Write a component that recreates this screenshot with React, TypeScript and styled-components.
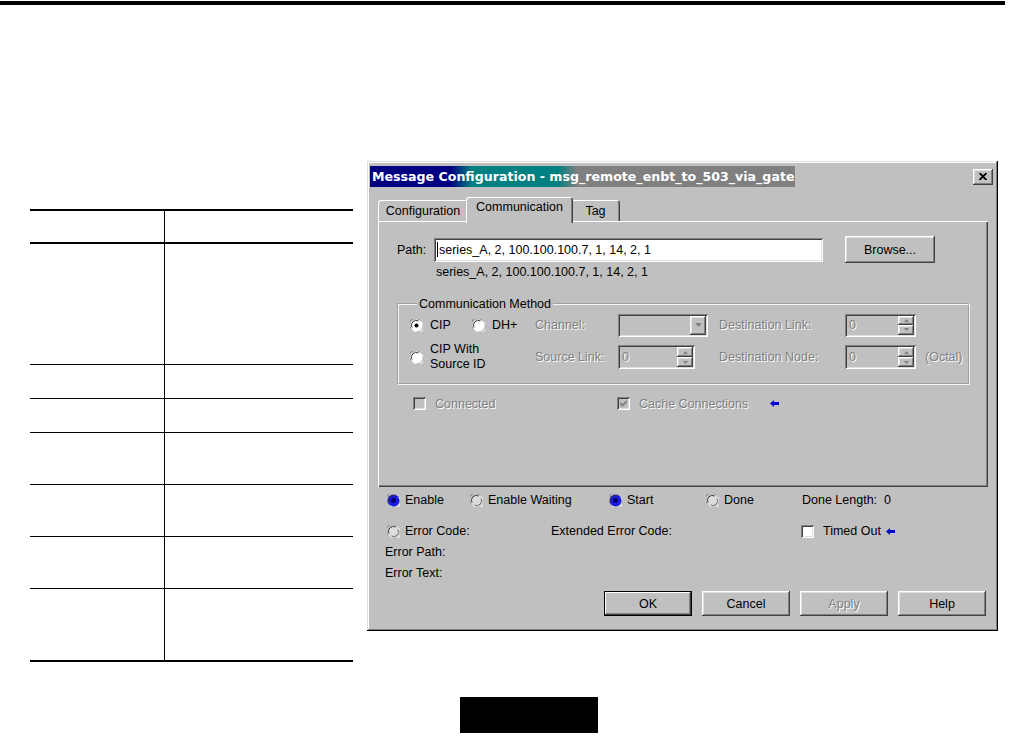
import styled, { createGlobalStyle, css } from "styled-components";

const GlobalStyle = createGlobalStyle`
  html, body {
    margin: 0;
    padding: 0;
    background: #fff;
  }
  body {
    font-family: "Liberation Sans", Arial, sans-serif;
  }
`;

// win98 bevels
const raised = css`
  box-shadow: inset -1px -1px #404040, inset 1px 1px #fff, inset -2px -2px #808080,
    inset 2px 2px #dfdfdf;
`;
const sunken = css`
  box-shadow: inset 1px 1px #808080, inset -1px -1px #fff, inset 2px 2px #404040,
    inset -2px -2px #dfdfdf;
`;

type RadioKind = "dot" | "empty" | "blue" | "pale";

function Radio({ kind }: { kind: RadioKind }) {
  const fill = kind === "blue" ? "#1a1ae6" : kind === "pale" ? "#dcdcdc" : "#fff";
  return (
    <svg width="13" height="13" viewBox="0 0 13 13">
      <circle cx="6.5" cy="6.5" r="6" fill={fill} />
      <path d="M1 9.5 A6 6 0 0 1 9.5 1" stroke="#808080" strokeWidth="1" fill="none" />
      <path d="M2 8.5 A4.8 4.8 0 0 1 8.5 2" stroke="#303030" strokeWidth="1" fill="none" />
      <path d="M12 3.5 A6 6 0 0 1 3.5 12" stroke="#fff" strokeWidth="1" fill="none" />
      {kind === "pale" && (
        <path d="M11 4.5 A4.8 4.8 0 0 1 4.5 11" stroke="#707070" strokeWidth="1" fill="none" />
      )}
      {kind === "dot" && <circle cx="6.5" cy="6.5" r="2" fill="#000" />}
      {kind === "blue" && <circle cx="6.5" cy="6.5" r="2.4" fill="#000060" />}
    </svg>
  );
}

function BackArrow() {
  return (
    <svg width="9" height="7" viewBox="0 0 9 7">
      <path d="M0 3.5 L4 0 V2 H9 V5 H4 V7 Z" fill="#0000d0" />
    </svg>
  );
}

const Page = styled.div`
  width: 1010px;
  height: 737px;
  overflow: hidden;
  background: #fff;
`;

const TopRule = styled.div`
  height: 4px;
  margin: 1px 5px 0 0;
  background: #000;
`;

const Main = styled.div`
  display: flex;
  align-items: flex-start;
  gap: 14px;
  padding-left: 30px;
  margin-top: 156px;
`;

const SpecTable = styled.div`
  width: 323px;
  margin-top: 48px;
`;

const SpecRow = styled.div<{ $h: number; $top?: boolean; $thick?: boolean }>`
  display: grid;
  grid-template-columns: 134px 1fr;
  box-sizing: border-box;
  height: ${(p) => p.$h}px;
  border-top: ${(p) => (p.$top ? "2px solid #000" : "none")};
  border-bottom: ${(p) => (p.$thick ? 2 : 1)}px solid #000;
`;

const SpecCell = styled.div`
  & + & {
    border-left: 1px solid #000;
  }
`;

const Footer = styled.div`
  padding-left: 460px;
  margin-top: 35px;
`;

const BlackBox = styled.div`
  width: 138px;
  height: 36px;
  background: #000;
`;

const Dialog = styled.div`
  width: 631px;
  height: 470px;
  box-sizing: border-box;
  padding: 5px 3px 0;
  background: #c0c0c0;
  box-shadow: inset -1px -1px #000, inset 1px 1px #dfdfdf, inset -2px -2px #808080,
    inset 2px 2px #fff;
  display: flex;
  flex-direction: column;
  font-family: "Liberation Sans", Arial, sans-serif;
  font-size: 12.5px;
  color: #000;
`;

const TitleBar = styled.div`
  display: flex;
  align-items: center;
  justify-content: space-between;
  height: 21px;
`;

const TitleText = styled.div`
  width: 425px;
  height: 21px;
  box-sizing: border-box;
  padding-left: 2px;
  line-height: 21px;
  white-space: nowrap;
  overflow: hidden;
  color: #fff;
  font-family: "DejaVu Sans", Verdana, sans-serif;
  font-weight: bold;
  font-size: 12.6px;
  background: linear-gradient(
    90deg,
    #000080 0%,
    #000080 19%,
    #008080 24%,
    #008080 44%,
    #808080 49%,
    #808080 100%
  );
`;

const CloseButton = styled.div`
  width: 20px;
  height: 16px;
  margin-right: 2px;
  background: #c0c0c0;
  display: flex;
  align-items: center;
  justify-content: center;
  ${raised}
`;

const Body = styled.div`
  flex: 1;
  display: flex;
  flex-direction: column;
  padding: 10px 7px 0 8px;
`;

const TabStrip = styled.div`
  display: flex;
  align-items: flex-end;
  height: 24px;
`;

const Tab = styled.div<{ $w: number; $active?: boolean }>`
  position: relative;
  box-sizing: border-box;
  width: ${(p) => p.$w}px;
  height: ${(p) => (p.$active ? 26 : 21)}px;
  margin: ${(p) => (p.$active ? "0 -2px -2px -2px" : "0")};
  z-index: ${(p) => (p.$active ? 2 : 1)};
  padding-top: ${(p) => (p.$active ? 3 : 4)}px;
  text-align: center;
  background: #c0c0c0;
  border-radius: 3px 3px 0 0;
  box-shadow: inset 1px 1px #fff, inset -1px 0 #404040, inset -2px 0 #808080;
`;

const Panel = styled.div`
  position: relative;
  height: 266px;
  box-sizing: border-box;
  padding: 15px 0 0 19px;
  box-shadow: inset 1px 1px #fff, inset -1px -1px #404040, inset -2px -2px #808080;
`;

const PathRow = styled.div`
  display: flex;
  align-items: center;
  height: 27px;
`;

const PathLabel = styled.span`
  width: 37px;
`;

const TextInput = styled.div`
  width: 389px;
  height: 24px;
  box-sizing: border-box;
  display: flex;
  align-items: center;
  padding-left: 3px;
  background: #fff;
  white-space: nowrap;
  ${sunken}
`;

const Caret = styled.span`
  width: 1px;
  height: 15px;
  margin-right: 1px;
  background: #000;
`;

const Button = styled.div<{ $w: number; $h: number; $default?: boolean; $disabled?: boolean }>`
  width: ${(p) => p.$w}px;
  height: ${(p) => p.$h}px;
  box-sizing: border-box;
  display: flex;
  align-items: center;
  justify-content: center;
  background: #c0c0c0;
  color: ${(p) => (p.$disabled ? "#808080" : "#000")};
  text-shadow: ${(p) => (p.$disabled ? "1px 1px #fff" : "none")};
  ${(p) =>
    p.$default
      ? css`
          box-shadow: inset 0 0 0 1px #000, inset -2px -2px #404040, inset 2px 2px #fff,
            inset -3px -3px #808080;
        `
      : raised}
`;

const BrowseButton = styled(Button)`
  margin-left: 22px;
`;

const PathEcho = styled.div`
  margin: 2px 0 0 39px;
  height: 15px;
  line-height: 15px;
`;

const GroupBox = styled.fieldset`
  width: 573px;
  box-sizing: border-box;
  margin: 17px 0 0;
  padding: 0 0 8px 11px;
  border: 2px groove #f4f4f4;
  min-inline-size: 0;
`;

const Legend = styled.legend`
  padding: 0 2px;
  margin-left: 7px;
`;

const ChoiceGrid = styled.div`
  display: grid;
  grid-template-columns: 125px 83px 101px 126px 80px auto;
  grid-template-rows: 28px 36px;
  align-items: center;
`;

const ChoicePair = styled.div`
  display: flex;
`;

const Choice = styled.label<{ $w?: number }>`
  display: flex;
  align-items: center;
  gap: 7px;
  width: ${(p) => (p.$w ? `${p.$w}px` : "auto")};
  line-height: 15px;
`;

const Dim = styled.span`
  color: #808080;
  text-shadow: 1px 1px #fff;
  white-space: nowrap;
`;

const Field = styled.div<{ $w: number; $h?: number }>`
  width: ${(p) => p.$w}px;
  height: ${(p) => p.$h ?? 23}px;
  box-sizing: border-box;
  display: flex;
  align-items: center;
  justify-content: space-between;
  padding: 2px;
  padding-left: 4px;
  background: #c0c0c0;
  ${sunken}
`;

const SpinStack = styled.div`
  display: flex;
  flex-direction: column;
  height: 100%;
`;

const SpinPart = styled.div`
  width: 16px;
  flex: 1;
  display: flex;
  align-items: center;
  justify-content: center;
  background: #c0c0c0;
  ${raised}
`;

const DropButton = styled.div`
  width: 16px;
  height: 100%;
  display: flex;
  align-items: center;
  justify-content: center;
  background: #c0c0c0;
  ${raised}
`;

function Spin({ w, h }: { w: number; h?: number }) {
  return (
    <Field $w={w} $h={h}>
      <Dim>0</Dim>
      <SpinStack>
        <SpinPart>
          <svg width="5" height="3" viewBox="0 0 5 3">
            <path d="M2.5 0 L5 3 H0 Z" fill="#808080" />
          </svg>
        </SpinPart>
        <SpinPart>
          <svg width="5" height="3" viewBox="0 0 5 3">
            <path d="M0 0 H5 L2.5 3 Z" fill="#808080" />
          </svg>
        </SpinPart>
      </SpinStack>
    </Field>
  );
}

const CheckRow = styled.div`
  display: flex;
  align-items: center;
  margin-top: 10px;
  padding-left: 16px;
  height: 17px;
`;

const CheckItem = styled.label<{ $w?: number }>`
  display: flex;
  align-items: center;
  gap: 9px;
  width: ${(p) => (p.$w ? `${p.$w}px` : "auto")};
`;

const Box = styled.span<{ $disabled?: boolean }>`
  width: 13px;
  height: 13px;
  box-sizing: border-box;
  display: flex;
  align-items: center;
  justify-content: center;
  background: ${(p) => (p.$disabled ? "#c0c0c0" : "#fff")};
  ${sunken}
`;

function Check({ checked, disabled }: { checked?: boolean; disabled?: boolean }) {
  return (
    <Box $disabled={disabled}>
      {checked && (
        <svg width="7" height="7" viewBox="0 0 7 7">
          <path d="M0 3 L2.5 5.5 L7 1" stroke="#808080" strokeWidth="1.8" fill="none" />
        </svg>
      )}
    </Box>
  );
}

const ArrowSlot = styled.span`
  display: flex;
  margin-left: 22px;
`;

const Status = styled.div`
  padding-left: 9px;
  margin-top: 3px;
`;

const StatusRow = styled.div<{ $gap?: number }>`
  display: flex;
  align-items: center;
  height: 20px;
  margin-top: ${(p) => p.$gap ?? 0}px;
`;

const StatusCell = styled.div<{ $w?: number }>`
  display: flex;
  align-items: center;
  gap: 5px;
  width: ${(p) => (p.$w ? `${p.$w}px` : "auto")};
  white-space: nowrap;
`;

const TimedLabel = styled.span`
  margin-left: 4px;
`;

const ErrorLine = styled.div<{ $gap: number }>`
  height: 14px;
  line-height: 14px;
  margin: ${(p) => p.$gap}px 0 0 -2px;
`;

const ButtonRow = styled.div`
  display: flex;
  justify-content: flex-end;
  gap: 10px;
  margin: 11px 2px 0 0;
`;

export default function App() {
  const rows = [121, 34, 34, 52, 52, 52];
  return (
    <Page>
      <GlobalStyle />
      <TopRule />
      <Main>
        <SpecTable>
          <SpecRow $h={35} $top $thick>
            <SpecCell />
            <SpecCell />
          </SpecRow>
          {rows.map((h, i) => (
            <SpecRow key={i} $h={h}>
              <SpecCell />
              <SpecCell />
            </SpecRow>
          ))}
          <SpecRow $h={73} $thick>
            <SpecCell />
            <SpecCell />
          </SpecRow>
        </SpecTable>

        <Dialog>
          <TitleBar>
            <TitleText>Message Configuration - msg_remote_enbt_to_503_via_gate</TitleText>
            <CloseButton>
              <svg width="8" height="7" viewBox="0 0 8 7">
                <path d="M0.5 0 L7.5 7 M7.5 0 L0.5 7" stroke="#000" strokeWidth="1.8" />
              </svg>
            </CloseButton>
          </TitleBar>

          <Body>
            <TabStrip>
              <Tab $w={90}>Configuration</Tab>
              <Tab $w={107} $active>
                Communication
              </Tab>
              <Tab $w={49}>Tag</Tab>
            </TabStrip>

            <Panel>
              <PathRow>
                <PathLabel>Path:</PathLabel>
                <TextInput>
                  <Caret />
                  series_A, 2, 100.100.100.7, 1, 14, 2, 1
                </TextInput>
                <BrowseButton $w={90} $h={27}>
                  Browse...
                </BrowseButton>
              </PathRow>
              <PathEcho>series_A, 2, 100.100.100.7, 1, 14, 2, 1</PathEcho>

              <GroupBox>
                <Legend>Communication Method</Legend>
                <ChoiceGrid>
                  <ChoicePair>
                    <Choice $w={62}>
                      <Radio kind="dot" />
                      CIP
                    </Choice>
                    <Choice>
                      <Radio kind="empty" />
                      DH+
                    </Choice>
                  </ChoicePair>
                  <Dim>Channel:</Dim>
                  <Field $w={90}>
                    <span />
                    <DropButton>
                      <svg width="7" height="4" viewBox="0 0 7 4">
                        <path d="M0 0 H7 L3.5 4 Z" fill="#808080" />
                      </svg>
                    </DropButton>
                  </Field>
                  <Dim>Destination Link:</Dim>
                  <Spin w={71} />
                  <span />

                  <Choice>
                    <Radio kind="empty" />
                    <span>
                      CIP With
                      <br />
                      Source ID
                    </span>
                  </Choice>
                  <Dim>Source Link:</Dim>
                  <Spin w={77} h={24} />
                  <Dim>Destination Node:</Dim>
                  <Spin w={71} h={24} />
                  <Dim>(Octal)</Dim>
                </ChoiceGrid>
              </GroupBox>

              <CheckRow>
                <CheckItem $w={204}>
                  <Check disabled />
                  <Dim>Connected</Dim>
                </CheckItem>
                <CheckItem>
                  <Check checked disabled />
                  <Dim>Cache Connections</Dim>
                </CheckItem>
                <ArrowSlot>
                  <BackArrow />
                </ArrowSlot>
              </CheckRow>
            </Panel>

            <Status>
              <StatusRow>
                <StatusCell $w={83}>
                  <Radio kind="blue" />
                  Enable
                </StatusCell>
                <StatusCell $w={139}>
                  <Radio kind="pale" />
                  Enable Waiting
                </StatusCell>
                <StatusCell $w={97}>
                  <Radio kind="blue" />
                  Start
                </StatusCell>
                <StatusCell $w={96}>
                  <Radio kind="pale" />
                  Done
                </StatusCell>
                <StatusCell>Done Length:&nbsp; 0</StatusCell>
              </StatusRow>
              <StatusRow $gap={11}>
                <StatusCell $w={164}>
                  <Radio kind="pale" />
                  Error Code:
                </StatusCell>
                <StatusCell $w={250}>Extended Error Code:</StatusCell>
                <StatusCell>
                  <Check />
                  <TimedLabel>Timed Out</TimedLabel>
                  <BackArrow />
                </StatusCell>
              </StatusRow>
              <ErrorLine $gap={4}>Error Path:</ErrorLine>
              <ErrorLine $gap={7}>Error Text:</ErrorLine>
            </Status>

            <ButtonRow>
              <Button $w={88} $h={25} $default>
                OK
              </Button>
              <Button $w={88} $h={25}>
                Cancel
              </Button>
              <Button $w={88} $h={25} $disabled>
                Apply
              </Button>
              <Button $w={88} $h={25}>
                Help
              </Button>
            </ButtonRow>
          </Body>
        </Dialog>
      </Main>
      <Footer>
        <BlackBox />
      </Footer>
    </Page>
  );
}
